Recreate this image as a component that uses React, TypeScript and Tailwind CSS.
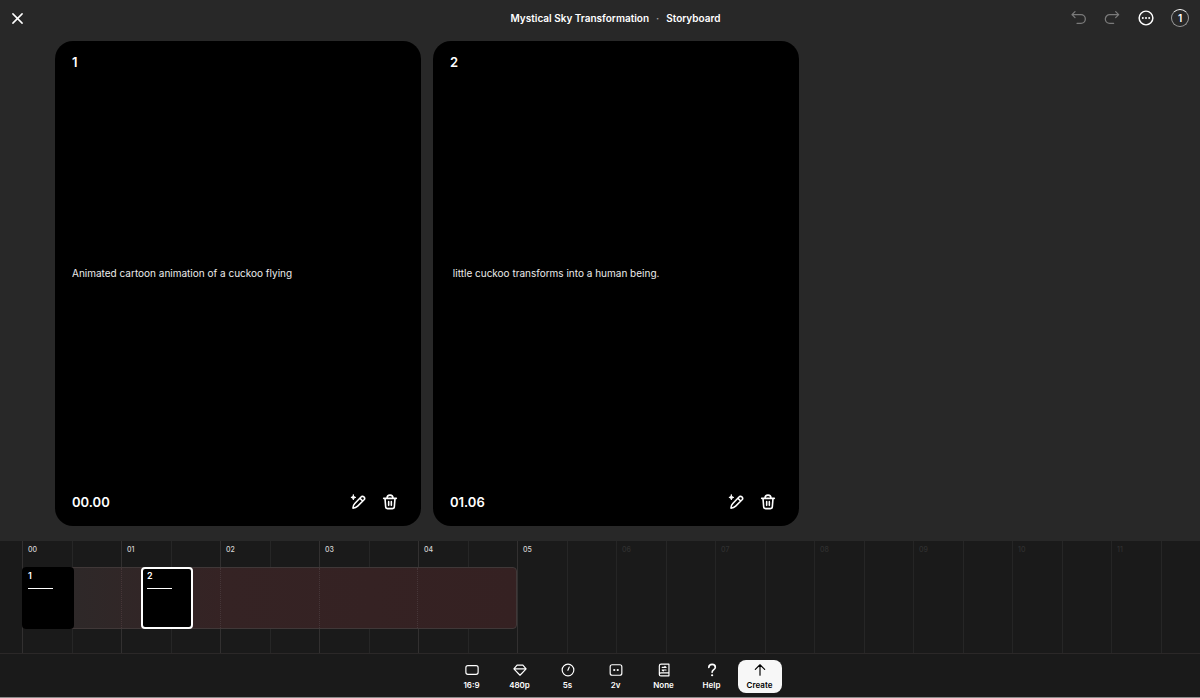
import { useState, type ReactNode } from "react";

type Scene = { id: number; time: string; start: number; text: string };

const INITIAL_SCENES: Scene[] = [
  { id: 1, time: "00.00", start: 0, text: "Animated cartoon animation of a cuckoo flying" },
  { id: 2, time: "01.06", start: 119, text: " little cuckoo transforms into a human being." },
];

const SECONDS = ["00", "01", "02", "03", "04", "05", "06", "07", "08", "09", "10", "11"];

function Icon({ size, children, width = 2 }: { size: number; children: ReactNode; width?: number }) {
  return (
    <svg
      width={size}
      height={size}
      viewBox="0 0 24 24"
      fill="none"
      stroke="currentColor"
      strokeWidth={width}
      strokeLinecap="round"
      strokeLinejoin="round"
      aria-hidden="true"
    >
      {children}
    </svg>
  );
}

const UndoIcon = () => (
  <Icon size={16} width={1.9}>
    <path d="M7.500 2.500 3 7l4.500 4.500M3 7h13.500a6.200 6.200 0 0 1 0 13H10.500" />
  </Icon>
);

const RedoIcon = () => (
  <Icon size={16} width={1.9}>
    <path d="m17.500 2.500 4.500 4.500-4.500 4.500M22 7H8.500a6.200 6.200 0 0 0 0 13h6" />
  </Icon>
);

const MoreIcon = () => (
  <Icon size={16} width={2.2}>
    <circle cx="12" cy="12" r="10.300" />
    <g fill="currentColor" stroke="none">
      <circle cx="7.200" cy="12" r="1.500" />
      <circle cx="12" cy="12" r="1.500" />
      <circle cx="16.800" cy="12" r="1.500" />
    </g>
  </Icon>
);

const RewriteIcon = () => (
  <Icon size={16} width={2.300}>
    <path d="m7.200 14.200 9.300-9.600a2.900 2.900 0 0 1 4.600 4.100L11.500 18.200c-1.900 1.900-4 2.900-7 3-.2-2.700.9-5.100 2.700-7ZM15 6.500l4 4" />
    <path
      d="M5 1.500c.5 2.300 1.200 3 3.600 3.600C6.200 5.700 5.500 6.400 5 8.700 4.500 6.400 3.800 5.700 1.400 5.100 3.800 4.500 4.500 3.800 5 1.500Z"
      fill="currentColor"
      strokeWidth="1.500"
    />
  </Icon>
);

const TrashIcon = () => (
  <Icon size={16} width={2.4}>
    <path d="M2.500 6.500h19M4.500 6.500l1 12.700a3 3 0 0 0 3 2.800h7a3 3 0 0 0 3-2.800l1-12.700M7.500 6.200a4.500 4.500 0 0 1 9 0M10 11.500v5.500M14 11.500v5.500" />
  </Icon>
);

const TOOLS: { label: string; name: string; icon: ReactNode }[] = [
  {
    label: "16:9",
    name: "Aspect ratio",
    icon: <rect x="1.500" y="4.500" width="21" height="15" rx="3.500" />,
  },
  {
    label: "480p",
    name: "Resolution",
    icon: <path d="M7 3.500h10l5.500 6.500L12 21 1.500 10 7 3.500ZM2.500 10h19" />,
  },
  {
    label: "5s",
    name: "Duration",
    icon: (
      <>
        <circle cx="12" cy="12" r="10" />
        <path d="m11.800 12.500 2.400-5.500" />
      </>
    ),
  },
  {
    label: "2v",
    name: "Variations",
    icon: (
      <>
        <rect x="2" y="3" width="20" height="18" rx="3.500" />
        <g fill="currentColor" stroke="none">
          <circle cx="9" cy="12" r="1.900" />
          <circle cx="15" cy="12" r="1.900" />
        </g>
      </>
    ),
  },
  {
    label: "None",
    name: "Preset",
    icon: (
      <path d="M20.500 17H6.500a2.500 2.500 0 0 0 0 5h14V2H7a3 3 0 0 0-3 3v14.500M9 7.500h6.500M9 12h6.500M13.500 5.800l2 1.700M11 13.700 9 12" />
    ),
  },
  {
    label: "Help",
    name: "Help",
    icon: (
      <>
        <path d="M6.500 7.500C6.800 4.300 9 2.300 12.200 2.300c3.300 0 5.500 2 5.500 4.900 0 4.300-5.500 4.300-5.500 8.800" strokeWidth="2.800" />
        <circle cx="12.200" cy="21" r="1.900" fill="currentColor" stroke="none" />
      </>
    ),
  },
];

function SceneCard({
  scene,
  onText,
  onDelete,
}: {
  scene: Scene;
  onText: (text: string) => void;
  onDelete: () => void;
}) {
  return (
    <article className="flex w-[366px] shrink-0 flex-col rounded-[18px] bg-black px-[17px] pt-[11px] pb-[14px] text-white">
      <h2 className="text-[13px] leading-5 font-semibold">{scene.id}</h2>
      <div className="flex flex-1 items-center pb-[18px]">
        <textarea
          aria-label={`Scene ${scene.id} description`}
          rows={1}
          value={scene.text}
          onChange={(e) => onText(e.target.value)}
          className="block w-full resize-none overflow-hidden bg-transparent text-[10px] leading-4 text-[#ececec] outline-none"
        />
      </div>
      <footer className="flex items-center justify-between pr-[6px]">
        <time className="text-[13px] leading-5 font-semibold">{scene.time}</time>
        <div className="flex gap-4">
          <button type="button" aria-label="Rewrite description">
            <RewriteIcon />
          </button>
          <button type="button" aria-label="Delete scene" onClick={onDelete}>
            <TrashIcon />
          </button>
        </div>
      </footer>
    </article>
  );
}

function Timeline({
  scenes,
  selected,
  onSelect,
}: {
  scenes: Scene[];
  selected: number;
  onSelect: (id: number) => void;
}) {
  return (
    <section aria-label="Timeline" className="overflow-hidden border-b border-[#2b2828] bg-[#1a1a1a] pl-[22px]">
      <div className="relative flex h-28">
        {SECONDS.map((second, i) => (
          <div key={second} className="flex w-[99px] shrink-0">
            <div
              className={
                i <= 5
                  ? "w-1/2 border-l border-[#323030] pt-[5px] pl-[5px] text-[7px] leading-2 font-medium text-[#d4d4d4]"
                  : "w-1/2 border-l border-[#252525] pt-[5px] pl-[5px] text-[7px] leading-2 font-medium text-[#303030]"
              }
            >
              {second}
            </div>
            <div className="w-1/2 border-l border-[#262626]" />
          </div>
        ))}
        <div className="absolute top-[26px] left-0 h-[62px] w-[495px] rounded border border-[#403838] bg-linear-to-r from-[#2b2a2a] via-[#352324] via-40% to-[#352122]">
          <div className="ml-[98px] flex h-full">
            <div className="w-[99px] border-l border-dotted border-[#463638]" />
            <div className="w-[99px] border-l border-dotted border-[#463638]" />
            <div className="w-[99px] border-l border-dotted border-[#463638]" />
            <div className="w-[99px] border-l border-dotted border-[#463638]" />
          </div>
        </div>
        {scenes.map((scene) => (
          <button
            key={scene.id}
            type="button"
            aria-label={`Scene ${scene.id} at ${scene.time}`}
            onClick={() => onSelect(scene.id)}
            style={{ left: scene.start }}
            className={
              scene.id === selected
                ? "absolute top-[26px] flex h-[62px] w-[52px] flex-col items-start rounded border-2 border-white bg-black px-1 py-px text-[9px] leading-3 font-semibold text-white"
                : "absolute top-[26px] flex h-[62px] w-[52px] flex-col items-start rounded border-2 border-black bg-black px-1 py-px text-[9px] leading-3 font-semibold text-white"
            }
          >
            {scene.id}
            <span className="mt-[6px] h-px w-[25px] bg-white" />
          </button>
        ))}
      </div>
    </section>
  );
}

export default function App() {
  const [scenes, setScenes] = useState(INITIAL_SCENES);
  const [selected, setSelected] = useState(2);

  return (
    <div className="flex min-h-screen flex-col border-b border-[#8c8c8c] bg-[#282828] font-['Inter',sans-serif] text-white">
      <header className="flex h-9 items-center">
        <div className="flex w-[166px] pl-[11px]">
          <button type="button" aria-label="Close">
            <Icon size={13} width={2.8}>
              <path d="m3.500 3.500 17 17M20.500 3.500l-17 17" />
            </Icon>
          </button>
        </div>
        <h1 className="flex flex-1 justify-center gap-[7px] text-[10px] leading-4 font-semibold">
          <span>Mystical Sky Transformation</span>
          <span className="text-[#a3a3a3]">·</span>
          <span>Storyboard</span>
        </h1>
        <div className="flex w-[135px] items-center justify-end gap-[18px] pr-[11px]">
          <button type="button" aria-label="Undo" className="text-[#7a7a7a]">
            <UndoIcon />
          </button>
          <button type="button" aria-label="Redo" className="text-[#7a7a7a]">
            <RedoIcon />
          </button>
          <button type="button" aria-label="More options">
            <MoreIcon />
          </button>
          <button
            type="button"
            aria-label="Queue: 1"
            className="-ml-px flex size-[18px] items-center justify-center rounded-full border border-[#9a9a9a] border-t-white text-[10px] leading-none font-semibold"
          >
            1
          </button>
        </div>
      </header>

      <main className="flex flex-1 gap-3 overflow-hidden pt-[5px] pr-4 pb-[15px] pl-[55px]">
        {scenes.map((scene) => (
          <SceneCard
            key={scene.id}
            scene={scene}
            onText={(text) => setScenes(scenes.map((s) => (s.id === scene.id ? { ...s, text } : s)))}
            onDelete={() => setScenes(scenes.filter((s) => s.id !== scene.id))}
          />
        ))}
      </main>

      <Timeline scenes={scenes} selected={selected} onSelect={setSelected} />

      <nav aria-label="Video settings" className="flex justify-center gap-1 bg-[#1a1a1a] pt-[6px] pb-1 pl-[31px]">
        {TOOLS.map((tool) => (
          <button
            key={tool.label}
            type="button"
            title={tool.name}
            className="flex h-[33px] w-11 flex-col items-center justify-center gap-[3px] pb-px text-[8px] leading-[10px] font-semibold"
          >
            <Icon size={14}>{tool.icon}</Icon>
            {tool.label}
          </button>
        ))}
        <button
          type="button"
          className="flex h-[33px] w-11 flex-col items-center justify-center gap-[3px] rounded-lg bg-[#f7f7f7] pb-px text-[8px] leading-[10px] font-semibold text-black"
        >
          <Icon size={14}>
            <path d="M12 21V3M4 11l8-8 8 8" />
          </Icon>
          Create
        </button>
      </nav>
    </div>
  );
}
